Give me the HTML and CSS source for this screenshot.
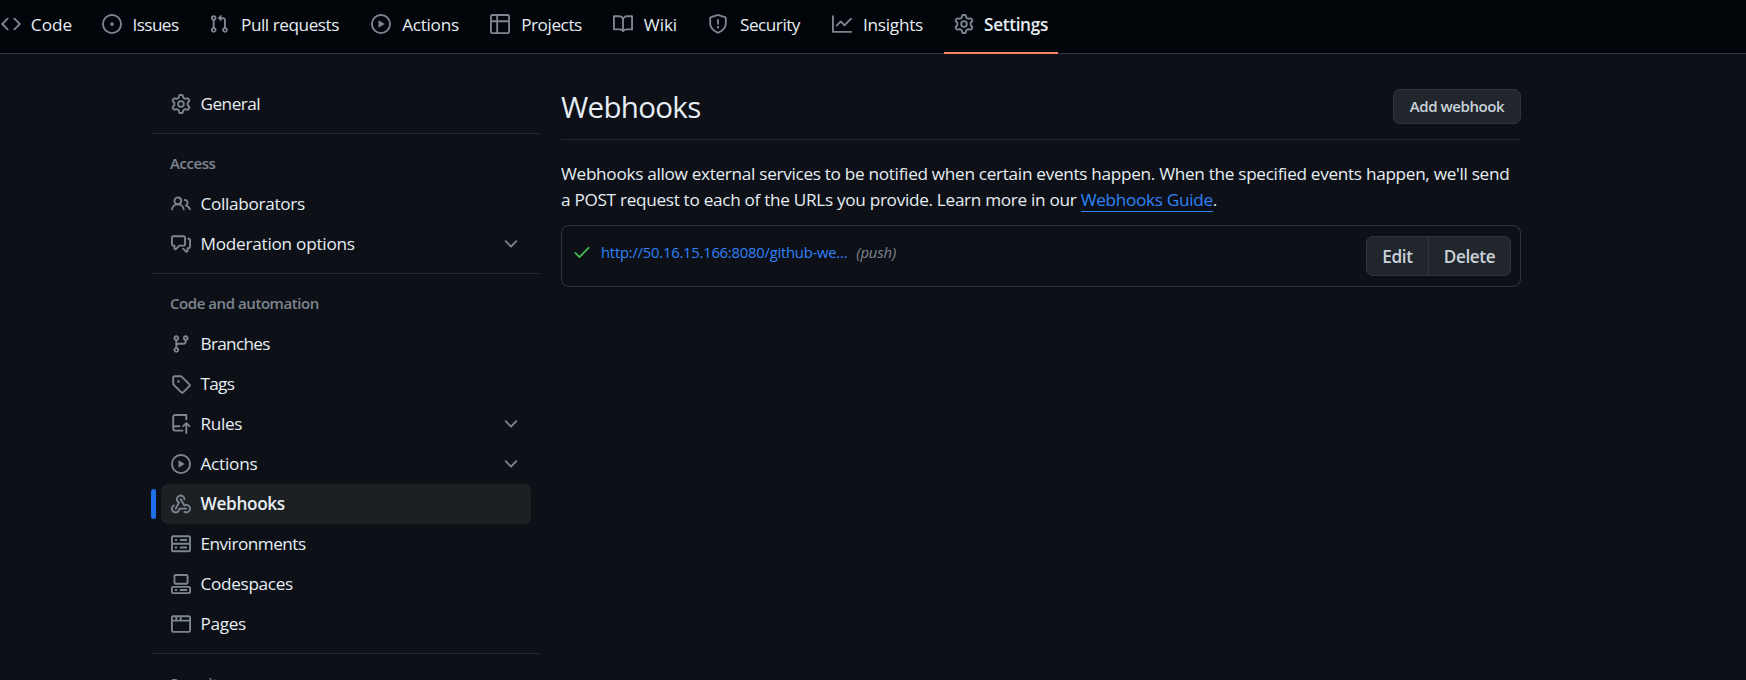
FILE: index.html
```html
<!DOCTYPE html>
<html lang="en">
<head>
<meta charset="utf-8">
<title>Webhooks</title>
<link rel="stylesheet" href="styles.css">
</head>
<body>
<svg class="sprite" aria-hidden="true">
<symbol id="code" viewBox="0 0 16 16"><path d="M4.72 3.22a.75.75 0 0 1 1.06 1.06L2.06 8l3.72 3.72a.75.75 0 1 1-1.06 1.06L.47 8.53a.75.75 0 0 1 0-1.06l4.25-4.25zm6.56 0a.75.75 0 1 0-1.06 1.06L13.94 8l-3.72 3.72a.75.75 0 1 0 1.06 1.06l4.25-4.25a.75.75 0 0 0 0-1.06l-4.25-4.25z"/></symbol>
<symbol id="issue" viewBox="0 0 16 16"><path d="M8 9.5a1.5 1.5 0 1 0 0-3 1.5 1.5 0 0 0 0 3Z"/><path d="M8 0a8 8 0 1 1 0 16A8 8 0 0 1 8 0ZM1.5 8a6.5 6.5 0 1 0 13 0 6.5 6.5 0 0 0-13 0Z"/></symbol>
<symbol id="pull" viewBox="0 0 16 16"><path d="M1.5 3.25a2.25 2.25 0 1 1 3 2.122v5.256a2.251 2.251 0 1 1-1.5 0V5.372A2.25 2.25 0 0 1 1.5 3.25Zm5.677-.177L9.573.677A.25.25 0 0 1 10 .854V2.5h1A2.5 2.5 0 0 1 13.5 5v5.628a2.251 2.251 0 1 1-1.5 0V5a1 1 0 0 0-1-1h-1v1.646a.25.25 0 0 1-.427.177L7.177 3.427a.25.25 0 0 1 0-.354ZM3.75 2.5a.75.75 0 1 0 0 1.5.75.75 0 0 0 0-1.5Zm0 9.5a.75.75 0 1 0 0 1.5.75.75 0 0 0 0-1.5Zm8.25.75a.75.75 0 1 0 1.5 0 .75.75 0 0 0-1.5 0Z"/></symbol>
<symbol id="play" viewBox="0 0 16 16"><path d="M8 0a8 8 0 1 1 0 16A8 8 0 0 1 8 0ZM1.5 8a6.5 6.5 0 1 0 13 0 6.5 6.5 0 0 0-13 0Zm4.879-2.773 4.264 2.559a.25.25 0 0 1 0 .428l-4.264 2.559A.25.25 0 0 1 6 10.559V5.442a.25.25 0 0 1 .379-.215Z"/></symbol>
<symbol id="table" viewBox="0 0 16 16"><path d="M0 1.75C0 .784.784 0 1.75 0h12.5C15.216 0 16 .784 16 1.75v12.5A1.75 1.75 0 0 1 14.25 16H1.75A1.75 1.75 0 0 1 0 14.25ZM6.5 6.5v8h7.75a.25.25 0 0 0 .25-.25V6.5Zm8-1.5V1.75a.25.25 0 0 0-.25-.25H6.5V5Zm-13 1.5v7.75c0 .138.112.25.25.25H5v-8ZM5 5V1.5H1.75a.25.25 0 0 0-.25.25V5Z"/></symbol>
<symbol id="book" viewBox="0 0 16 16"><path d="M0 1.75A.75.75 0 0 1 .75 1h4.253c1.227 0 2.317.59 3 1.501A3.743 3.743 0 0 1 11.006 1h4.245a.75.75 0 0 1 .75.75v10.5a.75.75 0 0 1-.75.75h-4.507a2.25 2.25 0 0 0-1.591.659l-.622.621a.75.75 0 0 1-1.06 0l-.622-.621A2.25 2.25 0 0 0 5.258 13H.75a.75.75 0 0 1-.75-.75Zm7.251 10.324.004-5.073-.002-2.253A2.25 2.25 0 0 0 5.003 2.5H1.5v9h3.757a3.75 3.75 0 0 1 1.994.574ZM8.755 4.75l-.004 7.322a3.752 3.752 0 0 1 1.992-.572H14.5v-9h-3.495a2.25 2.25 0 0 0-2.25 2.25Z"/></symbol>
<symbol id="shield" viewBox="0 0 16 16"><path d="M7.467.133a1.748 1.748 0 0 1 1.066 0l5.25 1.68A1.75 1.75 0 0 1 15 3.48V7c0 1.566-.32 3.182-1.303 4.682-.983 1.498-2.585 2.813-5.032 3.855a1.697 1.697 0 0 1-1.33 0c-2.447-1.042-4.049-2.357-5.032-3.855C1.32 10.182 1 8.566 1 7V3.48a1.75 1.75 0 0 1 1.217-1.667Zm.61 1.429a.25.25 0 0 0-.153 0l-5.25 1.68a.25.25 0 0 0-.174.238V7c0 1.358.275 2.666 1.057 3.86.784 1.194 2.121 2.34 4.366 3.297a.196.196 0 0 0 .154 0c2.245-.956 3.582-2.104 4.366-3.298C13.225 9.666 13.5 8.36 13.5 7V3.48a.251.251 0 0 0-.174-.237l-5.25-1.68ZM8.75 4.75v3a.75.75 0 0 1-1.5 0v-3a.75.75 0 0 1 1.5 0ZM9 10.5a1 1 0 1 1-2 0 1 1 0 0 1 2 0Z"/></symbol>
<symbol id="graph" viewBox="0 0 16 16"><path d="M1.5 1.75V13.5h13.75a.75.75 0 0 1 0 1.5H.75a.75.75 0 0 1-.75-.75V1.75a.75.75 0 0 1 1.5 0Zm14.28 2.53-5.25 5.25a.75.75 0 0 1-1.06 0L7 7.06 4.28 9.78a.751.751 0 0 1-1.042-.018.751.751 0 0 1-.018-1.042l3.25-3.25a.75.75 0 0 1 1.06 0L10 7.94l4.72-4.72a.751.751 0 0 1 1.042.018.751.751 0 0 1 .018 1.042Z"/></symbol>
<symbol id="gear" viewBox="0 0 16 16"><path d="M8 0a8.2 8.2 0 0 1 .701.031C9.444.095 9.99.645 10.16 1.29l.288 1.107c.018.066.079.158.212.224.231.114.454.243.668.386.123.082.233.09.299.071l1.103-.303c.644-.176 1.392.021 1.82.63.27.385.506.792.704 1.218.315.675.111 1.422-.364 1.891l-.814.806c-.049.048-.098.147-.088.294.016.257.016.515 0 .772-.01.147.038.246.088.294l.814.806c.475.469.679 1.216.364 1.891a7.977 7.977 0 0 1-.704 1.217c-.428.61-1.176.807-1.82.63l-1.102-.302c-.067-.019-.177-.011-.3.071a5.909 5.909 0 0 1-.668.386c-.133.066-.194.158-.211.224l-.29 1.106c-.168.646-.715 1.196-1.458 1.26a8.006 8.006 0 0 1-1.402 0c-.743-.064-1.289-.614-1.458-1.26l-.289-1.106c-.018-.066-.079-.158-.212-.224a5.738 5.738 0 0 1-.668-.386c-.123-.082-.233-.09-.299-.071l-1.103.303c-.644.176-1.392-.021-1.82-.63a8.12 8.12 0 0 1-.704-1.218c-.315-.675-.111-1.422.363-1.891l.815-.806c.05-.048.098-.147.088-.294a6.214 6.214 0 0 1 0-.772c.01-.147-.038-.246-.088-.294l-.815-.806C.635 6.045.431 5.298.746 4.623a7.92 7.92 0 0 1 .704-1.217c.428-.61 1.176-.807 1.82-.63l1.102.302c.067.019.177.011.3-.071.214-.143.437-.272.668-.386.133-.066.194-.158.211-.224l.29-1.106C6.009.645 6.556.095 7.299.03 7.53.01 7.764 0 8 0Zm-.571 1.525c-.036.003-.108.036-.137.146l-.289 1.105c-.147.561-.549.967-.998 1.189-.173.086-.34.183-.5.29-.417.278-.97.423-1.529.27l-1.103-.303c-.109-.03-.175.016-.195.045-.22.312-.412.644-.573.99-.014.031-.021.11.059.19l.815.806c.411.406.562.957.53 1.456a4.709 4.709 0 0 0 0 .582c.032.499-.119 1.05-.53 1.456l-.815.806c-.081.08-.073.159-.059.19.162.346.353.677.573.989.02.03.085.076.195.046l1.102-.303c.56-.153 1.113-.008 1.53.27.161.107.328.204.501.29.447.222.85.629.997 1.189l.289 1.105c.029.109.101.143.137.146a6.6 6.6 0 0 0 1.142 0c.036-.003.108-.036.137-.146l.289-1.105c.147-.561.549-.967.998-1.189.173-.086.34-.183.5-.29.417-.278.97-.423 1.529-.27l1.103.303c.109.029.175-.016.195-.045.22-.313.411-.644.573-.99.014-.031.021-.11-.059-.19l-.815-.806c-.411-.406-.562-.957-.53-1.456a4.709 4.709 0 0 0 0-.582c-.032-.499.119-1.05.53-1.456l.815-.806c.081-.08.073-.159.059-.19a6.464 6.464 0 0 0-.573-.989c-.02-.03-.085-.076-.195-.046l-1.102.303c-.56.153-1.113.008-1.53-.27a4.44 4.44 0 0 0-.501-.29c-.447-.222-.85-.629-.997-1.189l-.289-1.105c-.029-.11-.101-.143-.137-.146a6.6 6.6 0 0 0-1.142 0ZM11 8a3 3 0 1 1-6 0 3 3 0 0 1 6 0ZM9.5 8a1.5 1.5 0 1 0-3.001.001A1.5 1.5 0 0 0 9.5 8Z"/></symbol>
<symbol id="people" viewBox="0 0 16 16"><path d="M2 5.5a3.5 3.5 0 1 1 5.898 2.549 5.508 5.508 0 0 1 3.034 4.084.75.75 0 1 1-1.482.235 4 4 0 0 0-7.9 0 .75.75 0 0 1-1.482-.236A5.507 5.507 0 0 1 3.102 8.05 3.493 3.493 0 0 1 2 5.5ZM11 4a3.001 3.001 0 0 1 2.22 5.018 5.01 5.01 0 0 1 2.56 3.012.749.749 0 0 1-.885.954.752.752 0 0 1-.549-.514 3.507 3.507 0 0 0-2.522-2.372.75.75 0 0 1-.574-.73v-.352a.75.75 0 0 1 .416-.672A1.5 1.5 0 0 0 11 5.5.75.75 0 0 1 11 4Zm-5.5-.5a2 2 0 1 0-.001 3.999A2 2 0 0 0 5.5 3.5Z"/></symbol>
<symbol id="discussion" viewBox="0 0 16 16"><path d="M1.75 1h8.5c.966 0 1.75.784 1.75 1.75v5.5A1.75 1.75 0 0 1 10.25 10H7.061l-2.574 2.573A1.458 1.458 0 0 1 2 11.543V10h-.25A1.75 1.75 0 0 1 0 8.25v-5.5C0 1.784.784 1 1.75 1ZM1.5 2.75v5.5c0 .138.112.25.25.25h1a.75.75 0 0 1 .75.75v2.19l2.72-2.72a.749.749 0 0 1 .53-.22h3.5a.25.25 0 0 0 .25-.25v-5.5a.25.25 0 0 0-.25-.25h-8.5a.25.25 0 0 0-.25.25Zm13 2a.25.25 0 0 0-.25-.25h-.5a.75.75 0 0 1 0-1.5h.5c.966 0 1.75.784 1.75 1.75v5.5A1.75 1.75 0 0 1 14.25 12H14v1.543a1.458 1.458 0 0 1-2.487 1.03L9.22 12.28a.749.749 0 0 1 .326-1.275.749.749 0 0 1 .734.215l2.22 2.22v-2.19a.75.75 0 0 1 .75-.75h1a.25.25 0 0 0 .25-.25Z"/></symbol>
<symbol id="branch" viewBox="0 0 16 16"><path d="M9.5 3.25a2.25 2.25 0 1 1 3 2.122V6A2.5 2.5 0 0 1 10 8.5H6a1 1 0 0 0-1 1v1.128a2.251 2.251 0 1 1-1.5 0V5.372a2.25 2.25 0 1 1 1.5 0v1.836A2.493 2.493 0 0 1 6 7h4a1 1 0 0 0 1-1v-.628A2.25 2.25 0 0 1 9.5 3.25Zm-6 0a.75.75 0 1 0 1.5 0 .75.75 0 0 0-1.5 0Zm8.25-.75a.75.75 0 1 0 0 1.5.75.75 0 0 0 0-1.5ZM4.25 12a.75.75 0 1 0 0 1.5.75.75 0 0 0 0-1.5Z"/></symbol>
<symbol id="tag" viewBox="0 0 16 16"><path d="M1 7.775V2.75C1 1.784 1.784 1 2.75 1h5.025c.464 0 .91.184 1.238.513l6.25 6.25a1.75 1.75 0 0 1 0 2.474l-5.026 5.026a1.75 1.75 0 0 1-2.474 0l-6.25-6.25A1.752 1.752 0 0 1 1 7.775Zm1.5 0c0 .066.026.13.073.177l6.25 6.25a.25.25 0 0 0 .354 0l5.025-5.025a.25.25 0 0 0 0-.354l-6.25-6.25a.25.25 0 0 0-.177-.073H2.75a.25.25 0 0 0-.25.25ZM6 5a1 1 0 1 1 0 2 1 1 0 0 1 0-2Z"/></symbol>
<symbol id="push" viewBox="0 0 16 16"><path d="M1 2.5A2.5 2.5 0 0 1 3.5 0h8.75a.75.75 0 0 1 .75.75v3.5a.75.75 0 0 1-1.5 0V1.5h-8a1 1 0 0 0-1 1v6.708A2.493 2.493 0 0 1 3.5 9h3.25a.75.75 0 0 1 0 1.5H3.5a1 1 0 0 0 0 2h5.75a.75.75 0 0 1 0 1.5H3.5A2.5 2.5 0 0 1 1 11.5Zm13.23 7.79h-.001l-1.224-1.224v6.184a.75.75 0 0 1-1.5 0V9.066L10.28 10.29a.75.75 0 0 1-1.06-1.061l2.505-2.504a.75.75 0 0 1 1.06 0L15.29 9.23a.751.751 0 0 1-.018 1.042.751.751 0 0 1-1.042.018Z"/></symbol>
<symbol id="webhook" viewBox="0 0 16 16"><path d="M5.5 4.25a2.25 2.25 0 0 1 4.5 0 .75.75 0 0 0 1.5 0 3.75 3.75 0 1 0-6.14 2.889l-2.272 4.258a.75.75 0 0 0 1.324.706L7 7.25a.75.75 0 0 0-.309-1.015A2.25 2.25 0 0 1 5.5 4.25Z"/><path d="M7.364 3.607a.75.75 0 0 1 1.03.257l2.608 4.349a3.75 3.75 0 1 1-.628 6.785.75.75 0 0 1 .752-1.299 2.25 2.25 0 1 0-.033-3.88.75.75 0 0 1-1.03-.256L7.107 4.636a.75.75 0 0 1 .257-1.03Z"/><path d="M2.9 8.776A.75.75 0 0 1 2.625 9.8 2.25 2.25 0 1 0 6 11.75a.75.75 0 0 1 .75-.751h5.5a.75.75 0 0 1 0 1.5H7.425a3.751 3.751 0 1 1-5.55-3.998.75.75 0 0 1 1.024.274Z"/></symbol>
<symbol id="server" viewBox="0 0 16 16"><path d="M1.75 1h12.5c.966 0 1.75.784 1.75 1.75v4c0 .372-.116.717-.314 1 .198.283.314.628.314 1v4a1.75 1.75 0 0 1-1.75 1.75H1.75A1.75 1.75 0 0 1 0 12.75v-4c0-.358.109-.707.314-1a1.739 1.739 0 0 1-.314-1v-4C0 1.784.784 1 1.75 1ZM1.5 2.75v4c0 .138.112.25.25.25h12.5a.25.25 0 0 0 .25-.25v-4a.25.25 0 0 0-.25-.25H1.75a.25.25 0 0 0-.25.25Zm.25 5.75a.25.25 0 0 0-.25.25v4c0 .138.112.25.25.25h12.5a.25.25 0 0 0 .25-.25v-4a.25.25 0 0 0-.25-.25ZM7 4.75A.75.75 0 0 1 7.75 4h4.5a.75.75 0 0 1 0 1.5h-4.5A.75.75 0 0 1 7 4.75ZM7.75 10h4.5a.75.75 0 0 1 0 1.5h-4.5a.75.75 0 0 1 0-1.5ZM3 4.75A.75.75 0 0 1 3.75 4h.5a.75.75 0 0 1 0 1.5h-.5A.75.75 0 0 1 3 4.75ZM3.75 10h.5a.75.75 0 0 1 0 1.5h-.5a.75.75 0 0 1 0-1.5Z"/></symbol>
<symbol id="codespaces" viewBox="0 0 16 16"><path d="M0 11.25c0-.966.784-1.75 1.75-1.75h12.5c.966 0 1.75.784 1.75 1.75v3A1.75 1.75 0 0 1 14.25 16H1.75A1.75 1.75 0 0 1 0 14.25Zm2-9.5C2 .784 2.784 0 3.75 0h8.5C13.216 0 14 .784 14 1.75v5a1.75 1.75 0 0 1-1.75 1.75h-8.5A1.75 1.75 0 0 1 2 6.75Zm1.75-.25a.25.25 0 0 0-.25.25v5c0 .138.112.25.25.25h8.5a.25.25 0 0 0 .25-.25v-5a.25.25 0 0 0-.25-.25Zm-2 9.5a.25.25 0 0 0-.25.25v3c0 .138.112.25.25.25h12.5a.25.25 0 0 0 .25-.25v-3a.25.25 0 0 0-.25-.25Z"/><path d="M7 12.75a.75.75 0 0 1 .75-.75h4.5a.75.75 0 0 1 0 1.5h-4.5a.75.75 0 0 1-.75-.75Zm-4 0a.75.75 0 0 1 .75-.75h.5a.75.75 0 0 1 0 1.5h-.5a.75.75 0 0 1-.75-.75Z"/></symbol>
<symbol id="browser" viewBox="0 0 16 16"><path d="M0 2.75C0 1.784.784 1 1.75 1h12.5c.966 0 1.75.784 1.75 1.75v10.5A1.75 1.75 0 0 1 14.25 15H1.75A1.75 1.75 0 0 1 0 13.25ZM14.5 6h-13v7.25c0 .138.112.25.25.25h12.5a.25.25 0 0 0 .25-.25Zm-6-3.5v2h6V2.75a.25.25 0 0 0-.25-.25ZM5 2.5v2h2v-2Zm-3.25 0a.25.25 0 0 0-.25.25V4.5h2v-2Z"/></symbol>
<symbol id="chevron" viewBox="0 0 16 16"><path d="M12.78 5.22a.749.749 0 0 1 0 1.06l-4.25 4.25a.749.749 0 0 1-1.06 0L3.22 6.28a.749.749 0 1 1 1.06-1.06L8 8.939l3.72-3.719a.749.749 0 0 1 1.06 0Z"/></symbol>
<symbol id="check" viewBox="0 0 16 16"><path d="M13.78 4.22a.75.75 0 0 1 0 1.06l-7.25 7.25a.75.75 0 0 1-1.06 0L2.22 9.28a.751.751 0 0 1 .018-1.042.751.751 0 0 1 1.042-.018L6 10.94l6.72-6.72a.75.75 0 0 1 1.06 0Z"/></symbol>
</svg>

<nav class="repo-nav">
<a class="tab tab-code"><svg class="icon"><use href="#code"/></svg><span>Code</span></a>
<a class="tab tab-issues"><svg class="icon"><use href="#issue"/></svg><span>Issues</span></a>
<a class="tab tab-pulls"><svg class="icon"><use href="#pull"/></svg><span>Pull requests</span></a>
<a class="tab tab-actions"><svg class="icon"><use href="#play"/></svg><span>Actions</span></a>
<a class="tab tab-projects"><svg class="icon"><use href="#table"/></svg><span>Projects</span></a>
<a class="tab tab-wiki"><svg class="icon"><use href="#book"/></svg><span>Wiki</span></a>
<a class="tab tab-security"><svg class="icon"><use href="#shield"/></svg><span>Security</span></a>
<a class="tab tab-insights"><svg class="icon"><use href="#graph"/></svg><span>Insights</span></a>
<a class="tab tab-settings current"><svg class="icon"><use href="#gear"/></svg><span>Settings</span></a>
</nav>

<div class="layout">
<aside class="sidebar">
<section class="group">
<a class="item"><svg class="icon"><use href="#gear"/></svg><span class="ls-50">General</span></a>
</section>
<section class="group">
<h2 class="ls-44">Access</h2>
<a class="item"><svg class="icon"><use href="#people"/></svg><span class="ls-30">Collaborators</span></a>
<a class="item"><svg class="icon"><use href="#discussion"/></svg><span class="ls-25">Moderation options</span><svg class="icon chevron"><use href="#chevron"/></svg></a>
</section>
<section class="group">
<h2 class="ls-44">Code and automation</h2>
<a class="item"><svg class="icon"><use href="#branch"/></svg><span class="ls-70">Branches</span></a>
<a class="item"><svg class="icon"><use href="#tag"/></svg><span class="ls-70">Tags</span></a>
<a class="item"><svg class="icon"><use href="#push"/></svg><span class="ls-30">Rules</span><svg class="icon chevron"><use href="#chevron"/></svg></a>
<a class="item"><svg class="icon"><use href="#play"/></svg><span class="ls-25">Actions</span><svg class="icon chevron"><use href="#chevron"/></svg></a>
<a class="item active"><svg class="icon"><use href="#webhook"/></svg><span class="ls-30">Webhooks</span></a>
<a class="item"><svg class="icon"><use href="#server"/></svg><span class="ls-50">Environments</span></a>
<a class="item"><svg class="icon"><use href="#codespaces"/></svg><span class="ls-30">Codespaces</span></a>
<a class="item"><svg class="icon"><use href="#browser"/></svg><span class="ls-30">Pages</span></a>
</section>
<section class="group">
<h2 class="ls-44">Security</h2>
</section>
</aside>

<main class="content">
<header class="subhead">
<h1>Webhooks</h1>
<button class="btn btn-small">Add webhook</button>
</header>
<p class="intro">Webhooks allow external services to be notified when certain events happen. When the specified events happen, we'll send<br>a POST request to each of the URLs you provide. Learn more in our <a class="guide">Webhooks Guide</a>.</p>
<div class="hook">
<svg class="icon check"><use href="#check"/></svg>
<a class="url">http://50.16.15.166:8080/github-we...</a>
<em class="event">(push)</em>
<div class="btn-group">
<button class="btn">Edit</button>
<button class="btn">Delete</button>
</div>
</div>
</main>
</div>
</body>
</html>
```
FILE: styles.css
```css
* { box-sizing: border-box; }

body {
  margin: 0;
  height: 680px;
  overflow: hidden;
  background: #0d1117;
  color: #e6edf3;
  font: 17.2px/26.25px "Open Sans", "Noto Sans", sans-serif;
}

.sprite { display: none; }

.icon {
  flex: none;
  width: 20px;
  height: 20px;
  fill: #7d8590;
}

.ls-25 { letter-spacing: -.25px; }
.ls-30 { letter-spacing: -.32px; }
.ls-44 { letter-spacing: -.44px; }
.ls-50 { letter-spacing: -.52px; }
.ls-70 { letter-spacing: -.7px; }

/* Repository tabs */
.repo-nav {
  display: flex;
  gap: 10px;
  height: 54px;
  background: #010409;
  border-bottom: 1px solid #30363d;
}

.tab {
  display: flex;
  align-items: center;
  gap: 10px;
  height: 53px;
  padding: 0 10px 5px;
  white-space: nowrap;
}

.tab span { display: flex; justify-content: center; padding-top: 2px; }
.tab-code { margin-left: -9px; }
.tab-code span { width: 41px; }
.tab-issues span { width: 47px; letter-spacing: -.6px; }
.tab-pulls span { width: 102px; letter-spacing: -.46px; }
.tab-actions span { width: 59px; letter-spacing: -.27px; }
.tab-projects span { width: 63px; letter-spacing: -.44px; }
.tab-wiki span { width: 35px; letter-spacing: -.07px; }
.tab-security span { width: 64px; letter-spacing: -.5px; }
.tab-insights span { width: 62px; letter-spacing: -.27px; }
.tab-settings span { width: 64px; letter-spacing: -.34px; }

.current {
  height: 54px;
  padding-bottom: 4px;
  border-bottom: 2px solid #f78166;
  font-weight: 600;
}

/* Page columns */
.layout {
  display: flex;
  gap: 20px;
  padding: 30px 0 0 151px;
}

.sidebar { width: 390px; }

.group + .group {
  margin-top: 9px;
  border-top: 1px solid #21262d;
}

.group h2 {
  height: 50px;
  margin: 0;
  padding: 17px 19px 0;
  color: #7d8590;
  font-size: 15px;
  font-weight: 600;
  line-height: 25px;
}

.item {
  display: flex;
  align-items: center;
  gap: 9.5px;
  height: 40px;
  margin: 0 10px;
  padding: 0 10px;
  border-radius: 7px;
}

.chevron { margin-left: auto; }

.active {
  position: relative;
  background: #1c2023;
  font-weight: 600;
}

.active::before {
  content: "";
  position: absolute;
  left: -10px;
  top: 5px;
  width: 5px;
  height: 30px;
  border-radius: 3px;
  background: #1f6feb;
}

/* Main column */
.content { width: 960px; }

.subhead {
  display: flex;
  justify-content: space-between;
  height: 56px;
  padding-top: 5px;
  border-bottom: 1px solid #21262d;
}

h1 {
  margin: 0;
  font-size: 29.5px;
  font-weight: 400;
  line-height: 36px;
  letter-spacing: -.68px;
}

.btn {
  height: 40px;
  padding: 1px 14px 0;
  border: 1px solid #30363d;
  border-radius: 7px;
  background: #21262d;
  color: #c9d1d9;
  font: 600 17.2px/26px "Open Sans", "Noto Sans", sans-serif;
  letter-spacing: -.38px;
}

.btn-small {
  width: 128px;
  height: 35px;
  padding: 0 0 1px;
  font-size: 15px;
  letter-spacing: -.44px;
}

.intro {
  margin: 21px 0 0;
  letter-spacing: -.308px;
  white-space: nowrap;
}

.guide {
  border-bottom: 1px solid #2f81f7;
  color: #2f81f7;
}

.hook {
  display: flex;
  align-items: flex-start;
  height: 62px;
  margin-top: 11.5px;
  padding: 10px 9px 0 10px;
  border: 1px solid #30363d;
  border-radius: 8px;
}

.check { margin-top: 6px; fill: #3fb950; }

.url, .event {
  margin: 3px 0 0 9px;
  font-size: 14.8px;
  line-height: 26px;
}

.url { color: #2f81f7; letter-spacing: -.23px; }
.event { color: #7d8590; letter-spacing: -.12px; }

.btn-group { display: flex; margin-left: auto; }
.btn-group .btn:first-child { width: 63px; border-radius: 7px 0 0 7px; }
.btn-group .btn:last-child { width: 83px; margin-left: -1px; border-radius: 0 7px 7px 0; }
```
